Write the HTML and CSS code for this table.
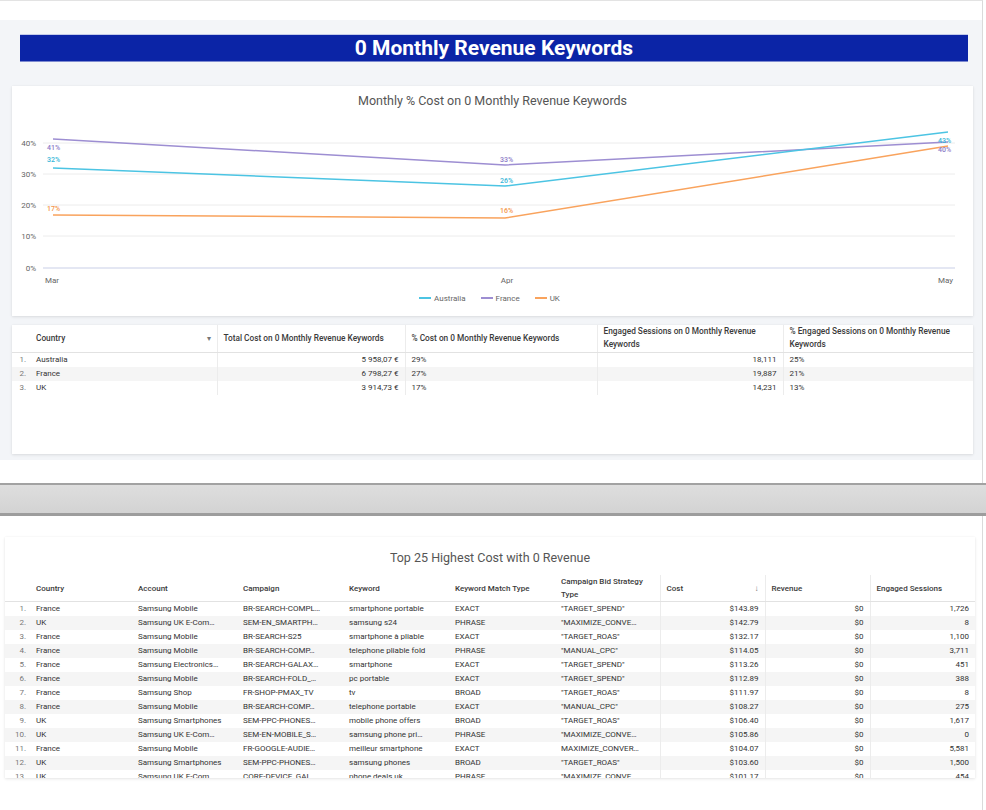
FILE: index.html
```html
<!DOCTYPE html>
<html lang="en">
<head>
<meta charset="utf-8">
<title>0 Monthly Revenue Keywords</title>
<link rel="stylesheet" href="styles.css">
</head>
<body>
<div class="viewer">
  <div class="topbar"></div>

  <section class="page page1">
    <div class="banner">0 Monthly Revenue Keywords</div>

    <div class="card chart-card">
      <div class="chart-title">Monthly % Cost on 0 Monthly Revenue Keywords</div>
      <svg class="chart" width="961" height="182" viewBox="12 108 961 182" xmlns="http://www.w3.org/2000/svg">
        <g class="grid">
          <line x1="43" y1="143" x2="955" y2="143"/>
          <line x1="43" y1="174" x2="955" y2="174"/>
          <line x1="43" y1="205" x2="955" y2="205"/>
          <line x1="43" y1="236" x2="955" y2="236"/>
        </g>
        <line class="baseline" x1="43" y1="268" x2="955" y2="268"/>
        <g class="ylab">
          <text x="36" y="146">40%</text>
          <text x="36" y="177">30%</text>
          <text x="36" y="208">20%</text>
          <text x="36" y="239">10%</text>
          <text x="36" y="271">0%</text>
        </g>
        <g class="xlab">
          <text x="45" y="283" text-anchor="start">Mar</text>
          <text x="507" y="283" text-anchor="middle">Apr</text>
          <text x="953" y="283" text-anchor="end">May</text>
        </g>
        <polyline class="s-fr" points="53,139 505,165 948,142"/>
        <polyline class="s-au" points="53,168 505,186 948,132"/>
        <polyline class="s-uk" points="53,215 505,218 948,146"/>
        <g class="dlab">
          <text class="t-fr" x="47" y="150">41%</text>
          <text class="t-au" x="47" y="162">32%</text>
          <text class="t-uk" x="47" y="211">17%</text>
          <text class="t-fr" x="500" y="162">33%</text>
          <text class="t-au" x="500" y="183">26%</text>
          <text class="t-uk" x="500" y="213">16%</text>
          <text class="t-au" x="938" y="143">43%</text>
          <text class="t-fr" x="938" y="152">40%</text>
        </g>
      </svg>
      <div class="legend">
        <span class="leg"><i class="mk mk-au"></i>Australia</span>
        <span class="leg"><i class="mk mk-fr"></i>France</span>
        <span class="leg"><i class="mk mk-uk"></i>UK</span>
      </div>
    </div>

    <div class="card table-card">
      <table class="t1">
        <colgroup>
          <col class="c-num1"><col class="c-a"><col class="c-b"><col class="c-c"><col class="c-d"><col class="c-e">
        </colgroup>
        <thead>
          <tr>
            <th class="num"></th>
            <th class="nb">Country<span class="sort">▾</span></th>
            <th>Total Cost on 0 Monthly Revenue Keywords</th>
            <th>% Cost on 0 Monthly Revenue Keywords</th>
            <th>Engaged Sessions on 0 Monthly Revenue Keywords</th>
            <th>% Engaged Sessions on 0 Monthly Revenue Keywords</th>
          </tr>
        </thead>
        <tbody>
          <tr><td class="num">1.</td><td class="nb">Australia</td><td class="r">5 958,07 €</td><td>29%</td><td class="r">18,111</td><td>25%</td></tr>
          <tr class="alt"><td class="num">2.</td><td class="nb">France</td><td class="r">6 798,27 €</td><td>27%</td><td class="r">19,887</td><td>21%</td></tr>
          <tr><td class="num">3.</td><td class="nb">UK</td><td class="r">3 914,73 €</td><td>17%</td><td class="r">14,231</td><td>13%</td></tr>
        </tbody>
      </table>
    </div>
  </section>

  <div class="page-gap"></div>
  <div class="separator"></div>

  <section class="page page2">
    <div class="card card2">
      <div class="t2-title">Top 25 Highest Cost with 0 Revenue</div>
      <table class="t2">
        <colgroup>
          <col class="w25"><col class="w102"><col class="w105"><col class="w106"><col class="w106"><col class="w106"><col class="w105"><col class="w105"><col class="w105"><col class="w105">
        </colgroup>
        <thead>
          <tr>
            <th class="num"></th>
            <th>Country</th>
            <th>Account</th>
            <th>Campaign</th>
            <th>Keyword</th>
            <th>Keyword Match Type</th>
            <th>Campaign Bid Strategy Type</th>
            <th class="m">Cost<span class="sort">↓</span></th>
            <th class="m">Revenue</th>
            <th class="m">Engaged Sessions</th>
          </tr>
        </thead>
        <tbody>
          <tr><td class="num">1.</td><td>France</td><td>Samsung Mobile</td><td>BR-SEARCH-COMPL…</td><td>smartphone portable</td><td>EXACT</td><td>"TARGET_SPEND"</td><td class="m r">$143.89</td><td class="m r">$0</td><td class="m r">1,726</td></tr>
          <tr class="alt"><td class="num">2.</td><td>UK</td><td>Samsung UK E-Com…</td><td>SEM-EN_SMARTPH…</td><td>samsung s24</td><td>PHRASE</td><td>"MAXIMIZE_CONVE…</td><td class="m r">$142.79</td><td class="m r">$0</td><td class="m r">8</td></tr>
          <tr><td class="num">3.</td><td>France</td><td>Samsung Mobile</td><td>BR-SEARCH-S25</td><td>smartphone à pliable</td><td>EXACT</td><td>"TARGET_ROAS"</td><td class="m r">$132.17</td><td class="m r">$0</td><td class="m r">1,100</td></tr>
          <tr class="alt"><td class="num">4.</td><td>France</td><td>Samsung Mobile</td><td>BR-SEARCH-COMP…</td><td>telephone pliable fold</td><td>PHRASE</td><td>"MANUAL_CPC"</td><td class="m r">$114.05</td><td class="m r">$0</td><td class="m r">3,711</td></tr>
          <tr><td class="num">5.</td><td>France</td><td>Samsung Electronics…</td><td>BR-SEARCH-GALAX…</td><td>smartphone</td><td>EXACT</td><td>"TARGET_SPEND"</td><td class="m r">$113.26</td><td class="m r">$0</td><td class="m r">451</td></tr>
          <tr class="alt"><td class="num">6.</td><td>France</td><td>Samsung Mobile</td><td>BR-SEARCH-FOLD_…</td><td>pc portable</td><td>EXACT</td><td>"TARGET_SPEND"</td><td class="m r">$112.89</td><td class="m r">$0</td><td class="m r">388</td></tr>
          <tr><td class="num">7.</td><td>France</td><td>Samsung Shop</td><td>FR-SHOP-PMAX_TV</td><td>tv</td><td>BROAD</td><td>"TARGET_ROAS"</td><td class="m r">$111.97</td><td class="m r">$0</td><td class="m r">8</td></tr>
          <tr class="alt"><td class="num">8.</td><td>France</td><td>Samsung Mobile</td><td>BR-SEARCH-COMP…</td><td>telephone portable</td><td>EXACT</td><td>"MANUAL_CPC"</td><td class="m r">$108.27</td><td class="m r">$0</td><td class="m r">275</td></tr>
          <tr><td class="num">9.</td><td>UK</td><td>Samsung Smartphones</td><td>SEM-PPC-PHONES…</td><td>mobile phone offers</td><td>BROAD</td><td>"TARGET_ROAS"</td><td class="m r">$106.40</td><td class="m r">$0</td><td class="m r">1,617</td></tr>
          <tr class="alt"><td class="num">10.</td><td>UK</td><td>Samsung UK E-Com…</td><td>SEM-EN-MOBILE_S…</td><td>samsung phone pri…</td><td>PHRASE</td><td>"MAXIMIZE_CONVE…</td><td class="m r">$105.86</td><td class="m r">$0</td><td class="m r">0</td></tr>
          <tr><td class="num">11.</td><td>France</td><td>Samsung Mobile</td><td>FR-GOOGLE-AUDIE…</td><td>meilleur smartphone</td><td>EXACT</td><td>MAXIMIZE_CONVER…</td><td class="m r">$104.07</td><td class="m r">$0</td><td class="m r">5,581</td></tr>
          <tr class="alt"><td class="num">12.</td><td>UK</td><td>Samsung Smartphones</td><td>SEM-PPC-PHONES…</td><td>samsung phones</td><td>BROAD</td><td>"TARGET_ROAS"</td><td class="m r">$103.60</td><td class="m r">$0</td><td class="m r">1,500</td></tr>
          <tr><td class="num">13.</td><td>UK</td><td>Samsung UK E-Com…</td><td>CORE-DEVICE_GAL…</td><td>phone deals uk</td><td>PHRASE</td><td>"MAXIMIZE_CONVE…</td><td class="m r">$101.17</td><td class="m r">$0</td><td class="m r">454</td></tr>
        </tbody>
      </table>
    </div>
  </section>
</div>
</body>
</html>
```

FILE: styles.css
```css
* { box-sizing: border-box; }

html, body {
  margin: 0;
  padding: 0;
  background: #ffffff;
  overflow: hidden;
}

body {
  font-family: Roboto, "Liberation Sans", Arial, sans-serif;
  color: #333333;
}

.viewer {
  width: 983px;
  border-top: 1px solid #e3e3e3;
  border-right: 1px solid #dadada;
}

.topbar {
  height: 19px;
  background: #ffffff;
}

/* ---------- page 1 ---------- */
.page1 {
  height: 440px;
  background: #f3f5f8;
  padding: 15px 9px 0 12px;
  display: flex;
  flex-direction: column;
}

.banner {
  margin: 0 5px 0 8px;
  height: 26px;
  line-height: 26px;
  background: #0b24a6;
  color: #ffffff;
  font-size: 21px;
  font-weight: 700;
  text-align: center;
  box-shadow: 0 1px 0 #7d8ad0, 0 -1px 0 #c4cbe9;
}

.card {
  background: #ffffff;
  box-shadow: 0 1px 3px rgba(0, 0, 0, 0.10), 0 0 1px rgba(0, 0, 0, 0.06);
}

.chart-card {
  margin-top: 25px;
  height: 230px;
  padding-top: 8px;
  display: flex;
  flex-direction: column;
}

.chart-title {
  height: 14px;
  line-height: 14px;
  font-size: 12.5px;
  color: #555555;
  text-align: center;
}

.chart {
  display: block;
}

.chart .grid line {
  stroke: #ececec;
  stroke-width: 1;
}

.chart .baseline {
  stroke: #c9cfe8;
  stroke-width: 1.2;
}

.chart text {
  font-family: Roboto, "Liberation Sans", Arial, sans-serif;
}

.chart .ylab text {
  font-size: 8px;
  fill: #666666;
  text-anchor: end;
}

.chart .xlab text {
  font-size: 8px;
  fill: #666666;
}

.chart polyline {
  fill: none;
  stroke-width: 1.5;
  stroke-linejoin: round;
}

.s-au { stroke: #4cc4e3; }
.s-fr { stroke: #9d8ed2; }
.s-uk { stroke: #f9a35d; }

.chart .dlab text {
  font-size: 7px;
  font-weight: 500;
}

.t-au { fill: #37b6d8; }
.t-fr { fill: #8d7cc8; }
.t-uk { fill: #f49449; }

.legend {
  height: 16px;
  display: flex;
  justify-content: center;
  align-items: center;
  gap: 15px;
  padding-right: 6px;
  font-size: 8px;
  color: #666666;
}

.leg {
  display: flex;
  align-items: center;
  gap: 3px;
}

.mk {
  display: inline-block;
  width: 12px;
  height: 2px;
}

.mk-au { background: #4cc4e3; }
.mk-fr { background: #9d8ed2; }
.mk-uk { background: #f9a35d; }

.table-card {
  margin-top: 9px;
  height: 129px;
  overflow: hidden;
}

table {
  border-collapse: collapse;
  table-layout: fixed;
  width: 100%;
}

th, td {
  font-size: 8px;
  color: #333333;
  padding: 0 6px;
  text-align: left;
  white-space: nowrap;
  overflow: hidden;
}

th {
  font-weight: 500;
  color: #3a3a3a;
  vertical-align: middle;
  border-bottom: 1px solid #e2e2e2;
}

.t1 .c-num1 { width: 18px; }
.t1 .c-a { width: 187px; }
.t1 .c-b { width: 188px; }
.t1 .c-c { width: 192px; }
.t1 .c-d { width: 186px; }
.t1 .c-e { width: 190px; }

.t1 th {
  height: 27px;
  white-space: normal;
  line-height: 13px;
  padding: 0 8px 0 6px;
  font-size: 8.3px;
}

.t1 td {
  height: 14px;
  line-height: 14px;
}

.t1 th + th + th,
.t1 td + td + td {
  border-left: 1px solid #ececec;
}

.sort {
  float: right;
  color: #777777;
  font-size: 8px;
}

.t1 th.nb .sort { margin-right: -2px; }

td.num, th.num {
  padding: 0 4px 0 0;
  text-align: right;
  color: #777777;
}

td.r { text-align: right; }

tr.alt td { background: #f5f5f5; }

/* ---------- separator ---------- */
.page-gap {
  height: 23px;
  background: #ffffff;
}

.separator {
  height: 33px;
  margin-right: -4px;
  border-top: 2px solid #a2a2a2;
  border-bottom: 3px solid #9d9d9d;
  background: linear-gradient(#dedede, #d3d3d3);
}

/* ---------- page 2 ---------- */
.page2 {
  padding: 21px 7px 0 5px;
  height: 294px;
}

.card2 {
  height: 241px;
  overflow: hidden;
  padding-top: 14px;
}

.t2-title {
  height: 14px;
  line-height: 14px;
  font-size: 12.5px;
  color: #555555;
  text-align: center;
  margin-bottom: 10px;
}

.t2 .w25 { width: 25px; }
.t2 .w102 { width: 102px; }
.t2 .w105 { width: 105px; }
.t2 .w106 { width: 106px; }

.t2 th {
  height: 26px;
  white-space: normal;
  line-height: 13px;
}

.t2 td {
  height: 14px;
  line-height: 14px;
}

.t2 td.m, .t2 th.m {
  border-left: 1px solid #ececec;
}

.t2 td.m.r { padding-right: 6px; }
```
